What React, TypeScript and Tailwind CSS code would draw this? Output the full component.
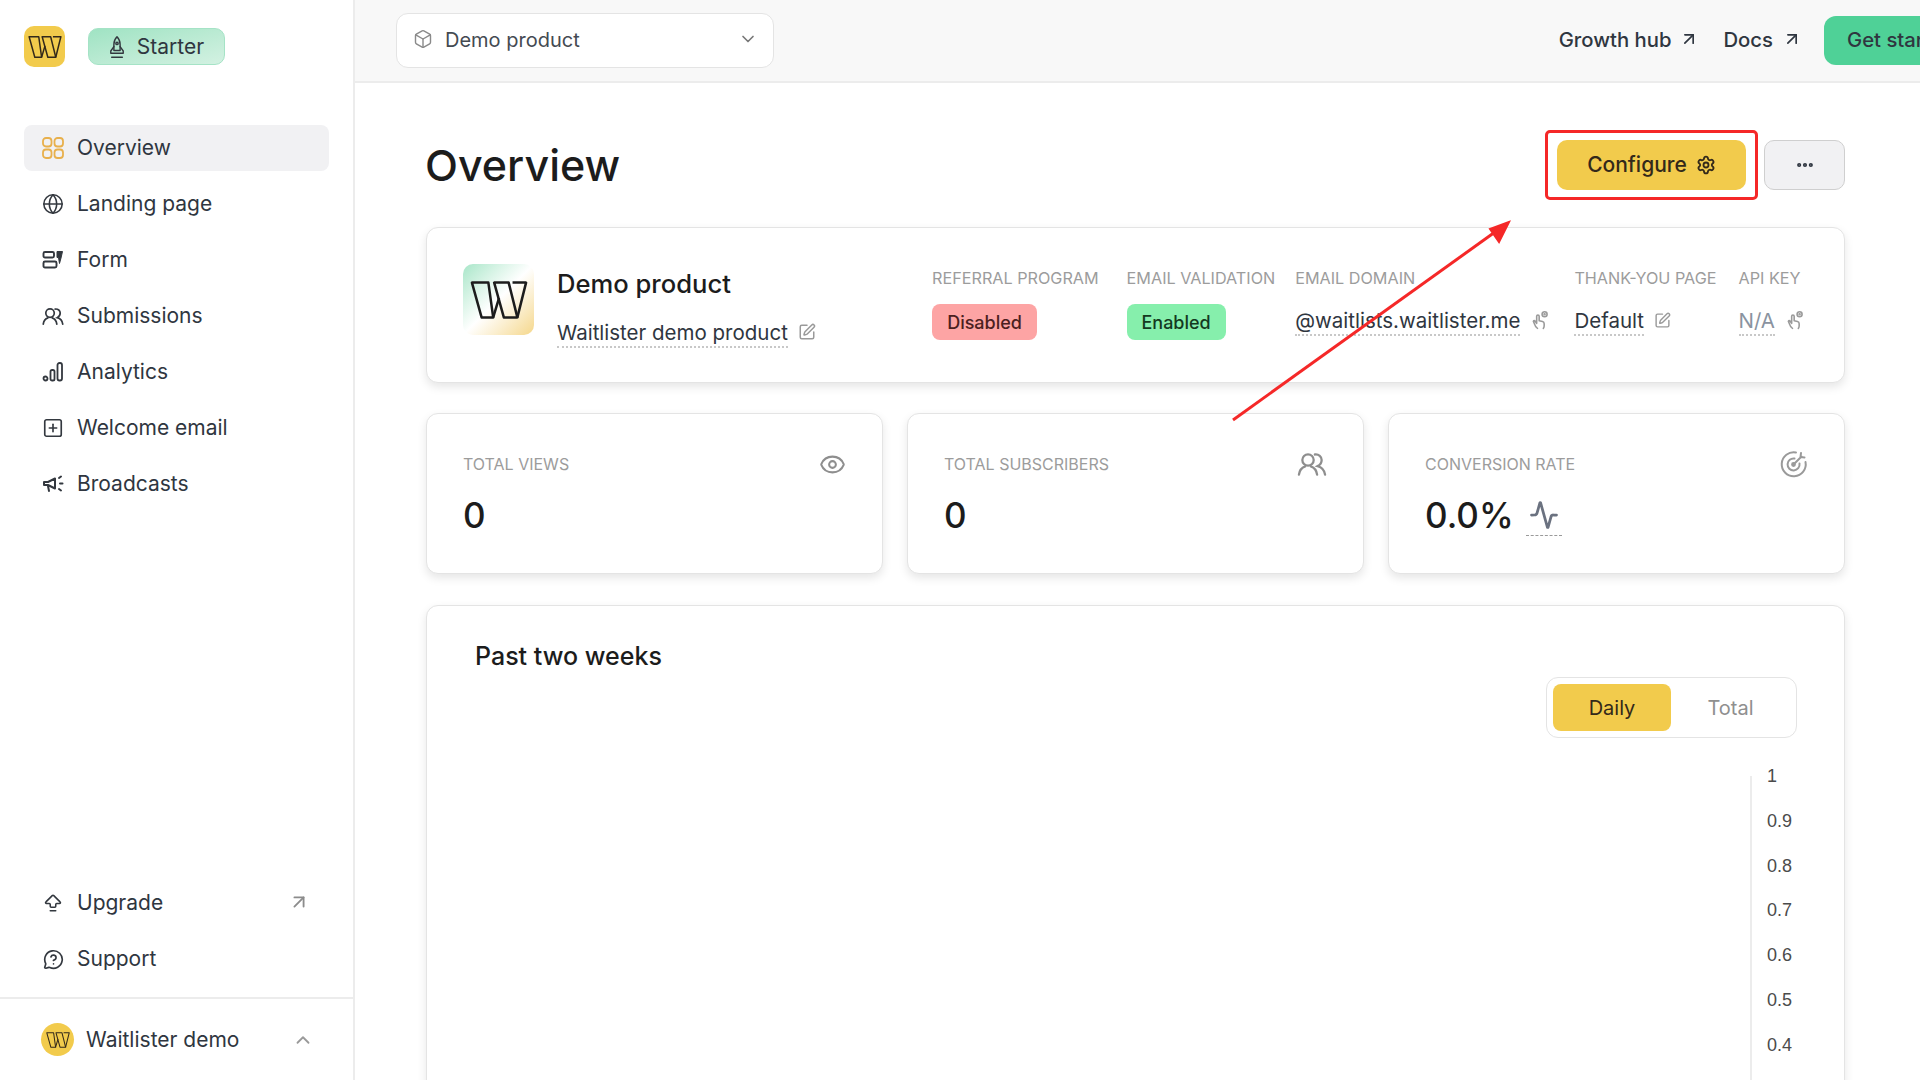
import React from 'react';
import {
  ArrowBigUpDash,
  ArrowUpRight,
  Activity,
  Box,
  ChevronDown,
  ChevronUp,
  Ellipsis,
  Eye,
  Globe,
  MessageCircleQuestion,
  Settings,
  SquarePen,
  SquarePlus,
} from 'lucide-react';

const WMark = ({ className }: { className?: string }) => (
  <svg viewBox="0 0 60 40" className={className} fill="none" stroke="currentColor" strokeWidth="2.6" strokeLinejoin="round">
    <path d="M2 2H19L24 38H12Z" />
    <path d="M25 2H40L49 38H35Z" />
    <path d="M24 38L30 18M49 38L58 2H44" />
  </svg>
);

const GridIcon = () => (
  <svg viewBox="0 0 22 22" className="w-[22px] h-[22px]" fill="none" stroke="#e8b04c" strokeWidth="1.8">
    <rect x="1" y="1" width="8.5" height="8.5" rx="3" />
    <rect x="12.5" y="1" width="8.5" height="8.5" rx="3" />
    <rect x="1" y="12.5" width="8.5" height="8.5" rx="3" />
    <rect x="12.5" y="12.5" width="8.5" height="8.5" rx="3" />
  </svg>
);

const FormIcon = () => (
  <svg viewBox="0 0 22 22" className="w-[22px] h-[22px]" fill="none" stroke="#33383f" strokeWidth="1.9">
    <rect x="1.5" y="3" width="10.5" height="5.5" rx="1.5" />
    <rect x="1.5" y="12.5" width="13" height="6" rx="1.5" />
    <path d="M15 2.5H20.5L19 9L17.5 14.5L16.5 8.5H15Z" fill="#33383f" strokeWidth="1" />
  </svg>
);

const UsersIcon = ({ className, color }: { className?: string; color: string }) => (
  <svg viewBox="0 0 26 22" className={className} fill="none" stroke={color} strokeWidth="2" strokeLinecap="round">
    <circle cx="9.5" cy="7" r="5" />
    <path d="M1.5 20C2 16 4.5 13.5 7 12.6M12 12.6C14.5 13.5 17 16 17.5 20" />
    <path d="M15.5 2.2C19 1.8 21.5 4 21.5 7C21.5 9.6 20 11.4 18 12.4C21.5 13.4 24 16 24.5 20" />
  </svg>
);

const BarsIcon = () => (
  <svg viewBox="0 0 22 22" className="w-[22px] h-[22px]" fill="none" stroke="#33383f" strokeWidth="1.8">
    <circle cx="3.5" cy="17.5" r="2" />
    <rect x="8.5" y="9" width="4" height="10.5" rx="1.6" />
    <rect x="15.5" y="2" width="4.5" height="17.5" rx="2" />
  </svg>
);

const MegaphoneIcon = () => (
  <svg viewBox="0 0 22 22" className="w-[22px] h-[22px]" fill="none" stroke="#33383f" strokeWidth="2" strokeLinecap="round" strokeLinejoin="round">
    <path d="M2 9H6L13 5.5V15.5L6 12H2Z" />
    <path d="M6 13L7 18" />
    <path d="M17 5L19 3.5M18 10.5H20.5M17 16L19 17.5" />
  </svg>
);

const TargetIcon = () => (
  <svg viewBox="0 0 28 28" className="w-[28px] h-[28px]" fill="none" stroke="#9a9a9a" strokeWidth="2" strokeLinecap="round">
    <path d="M25.5 12A12 12 0 1 1 16 2.5" />
    <path d="M19.5 13.5A6 6 0 1 1 14.5 8.5" />
    <circle cx="13.5" cy="14.5" r="1.4" fill="#9a9a9a" />
    <path d="M14 14L21.5 6.5M21 3L20.5 7L24.5 7.5" />
  </svg>
);

const RocketIcon = () => (
  <svg viewBox="0 0 18 26" className="w-[16px] h-[24px]" fill="none" stroke="#33383f" strokeWidth="1.6" strokeLinejoin="round" strokeLinecap="round">
    <path d="M9 1.5C11.5 4 12.5 7 12.5 10V17H5.5V10C5.5 7 6.5 4 9 1.5Z" />
    <path d="M5.5 12.5L2 17.5V20H16V17.5L12.5 12.5" />
    <circle cx="9" cy="9" r="1.3" />
    <path d="M3 24.5H15" />
  </svg>
);

const TapIcon = ({ size = 20 }: { size?: number }) => (
  <svg viewBox="0 0 24 24" width={size} height={size} fill="none" stroke="currentColor" strokeWidth="1.9" strokeLinecap="round" strokeLinejoin="round">
    <path d="M9 22C7 21 6 19 5.5 17L4 13.5C4.5 12.5 5.5 12.5 6.2 13.5L8 16V7.5A1.5 1.5 0 0 1 11 7.5V13L15 13.8C16.5 14.1 17 15 17 16.5V19C17 20.5 16.5 21.5 16 22" />
    <circle cx="17.5" cy="5" r="3" />
    <circle cx="17.5" cy="5" r="0.6" fill="currentColor" />
  </svg>
);

const navItems: { label: string; icon: React.ReactNode; active?: boolean }[] = [
  { label: 'Overview', icon: <GridIcon />, active: true },
  { label: 'Landing page', icon: <Globe size={22} strokeWidth={1.7} /> },
  { label: 'Form', icon: <FormIcon /> },
  { label: 'Submissions', icon: <UsersIcon className="w-[24px] h-[21px]" color="#33383f" /> },
  { label: 'Analytics', icon: <BarsIcon /> },
  { label: 'Welcome email', icon: <SquarePlus size={22} strokeWidth={1.8} /> },
  { label: 'Broadcasts', icon: <MegaphoneIcon /> },
];

const NavRow = ({ label, icon, active, trailing }: { label: string; icon: React.ReactNode; active?: boolean; trailing?: React.ReactNode }) => (
  <div className={`flex items-center h-[46px] pl-[18px] pr-[22px] rounded-lg text-[21px] text-[#2f3640] ${active ? 'bg-[#f1f1f3]' : ''}`}>
    <span className="w-[22px] flex justify-center text-[#33383f]">{icon}</span>
    <span className="ml-[13px]">{label}</span>
    {trailing}
  </div>
);

const Meta = ({ label, className, children }: { label: string; className?: string; children: React.ReactNode }) => (
  <div className={`flex flex-col ${className ?? ''}`}>
    <span className="text-[16.2px] leading-[20px] text-[#9c9c9c] whitespace-nowrap">{label}</span>
    <div className="mt-[16px] h-[36px] flex items-center">{children}</div>
  </div>
);

const Linked = ({ text, muted, icon }: { text: string; muted?: boolean; icon: React.ReactNode }) => (
  <div className="flex items-center gap-[10px] whitespace-nowrap">
    <span className={`text-[20.5px] leading-[26px] border-b-2 border-dotted border-[#c8c8c8] ${muted ? 'text-[#8a93a0]' : 'text-[#2f3640]'}`}>{text}</span>
    <span className="text-[#9a9a9a] -mt-[4px]">{icon}</span>
  </div>
);

const StatCard = ({ label, icon, children }: { label: string; icon: React.ReactNode; children: React.ReactNode }) => (
  <div className="h-[161px] px-[36px] pt-[36px] bg-white rounded-xl border border-[#e4e4e4] shadow-[0_4px_10px_rgba(0,0,0,0.1)]">
    <div className="flex items-center justify-between h-[28px]">
      <span className="text-[16px] text-[#9c9c9c]">{label}</span>
      {icon}
    </div>
    <div className="mt-[15px] flex items-center text-[#1c1c1c]">{children}</div>
  </div>
);

export default function App() {
  return (
    <div className="relative flex w-[1920px] h-[1080px] overflow-hidden bg-white font-['Inter',sans-serif]">
      {/* Sidebar */}
      <aside className="flex flex-col w-[355px] flex-none border-r-2 border-[#ececec] bg-white">
        <div className="flex items-center pl-[24px] pt-[26px]">
          <div className="w-[41px] h-[41px] rounded-[10px] bg-[#f2cb4c] flex items-center justify-center text-[#33291a]">
            <WMark className="w-[34px] h-[26px]" />
          </div>
          <div className="ml-[23px] w-[137px] h-[37px] rounded-[10px] border border-[#a5e3c6] bg-gradient-to-br from-[#9fe3c3] to-[#d3f1e2] flex items-center justify-center gap-[12px] text-[21px] text-[#2f3640]">
            <RocketIcon />
            Starter
          </div>
        </div>

        <nav className="mt-[58px] mx-[24px] flex flex-col gap-[10px]">
          {navItems.map((item) => (
            <NavRow key={item.label} {...item} />
          ))}
        </nav>

        <div className="mt-auto mx-[24px] flex flex-col gap-[10px]">
          <NavRow
            label="Upgrade"
            icon={<ArrowBigUpDash size={25} strokeWidth={1.7} />}
            trailing={<ArrowUpRight size={22} className="ml-auto -mr-[3px] -mt-[2px] text-[#8c8c8c]" />}
          />
          <NavRow label="Support" icon={<MessageCircleQuestion size={21} strokeWidth={1.9} />} />
        </div>

        <div className="mt-[15px] h-[83px] border-t-2 border-[#ececec] flex items-center pl-[41px] pr-[39px]">
          <div className="w-[33px] h-[33px] rounded-full bg-[#f2cb4c] flex items-center justify-center text-[#33291a]">
            <WMark className="w-[24px] h-[18px]" />
          </div>
          <span className="ml-[12px] text-[21px] text-[#2f3640]">Waitlister demo</span>
          <ChevronUp size={22} className="ml-auto text-[#9a9a9a]" />
        </div>
      </aside>

      <div className="flex-1 min-w-0 flex flex-col">
        {/* Top bar */}
        <header className="h-[83px] flex-none flex items-center bg-[#f8f8f8] border-b-2 border-[#ececec] pl-[41px]">
          <div className="w-[378px] h-[55px] -mt-[1px] flex items-center bg-white border border-[#e4e4e4] rounded-xl pl-[16px] pr-[15px] text-[20px] text-[#444a52]">
            <Box size={20} strokeWidth={1.7} className="text-[#8a8a8a] -mt-[3px]" />
            <span className="ml-[12px]">Demo product</span>
            <ChevronDown size={20} className="ml-auto text-[#777777] -mt-[3px]" />
          </div>
          <div className="ml-auto -mr-[96px] flex items-center flex-none text-[20.3px] font-medium text-[#2f3640]">
            <span>Growth hub</span>
            <ArrowUpRight size={20} className="ml-[8px] -mt-[4px]" />
            <span className="ml-[24px]">Docs</span>
            <ArrowUpRight size={20} className="ml-[9px] -mt-[4px]" />
            <div className="ml-[22px] h-[49px] w-[192px] pl-[23px] rounded-[12px] bg-[#4fd197] flex items-center whitespace-nowrap">Get started</div>
          </div>
        </header>

        {/* Main */}
        <main className="flex-1 min-h-0 pl-[71px] pr-[75px]">
          <div className="flex items-center justify-between h-[50px] mt-[57px]">
            <h1 className="text-[43px] font-medium text-[#1c1c1c] -ml-[1px]">Overview</h1>
            <div className="flex items-center gap-[18px]">
              <div className="relative">
                <div className="w-[189px] h-[50px] rounded-[10px] bg-[#f2cb4c] flex items-center justify-center gap-[9px] text-[21px] font-medium text-[#33291a]">
                  Configure
                  <Settings size={20} strokeWidth={2.2} />
                </div>
                <div className="absolute -inset-x-[12px] -inset-y-[10px] border-[3px] border-[#f52828] rounded-[5px]" />
              </div>
              <div className="w-[81px] h-[50px] rounded-[10px] bg-[#f1f1f3] border border-[#cfcfcf] flex items-center justify-center text-[#2f3640]">
                <Ellipsis size={20} strokeWidth={3} />
              </div>
            </div>
          </div>

          {/* Product card */}
          <section className="mt-[37px] h-[156px] bg-white rounded-xl border border-[#e4e4e4] shadow-[0_4px_10px_rgba(0,0,0,0.1)] flex pl-[36px] pr-[39px] pt-[36px]">
            <div className="w-[71px] h-[71px] rounded-[10px] bg-gradient-to-br from-[#a8e6c9] via-[#ffffff] to-[#f5d78a] flex items-center justify-center text-[#1c1c1c]">
              <WMark className="w-[58px] h-[40px]" />
            </div>
            <div className="ml-[23px]">
              <div className="text-[25.6px] leading-[34px] font-medium text-[#1c1c1c] mt-[3px]">Demo product</div>
              <div className="mt-[19px] flex items-center gap-[10px]">
                <span className="text-[20.5px] leading-[26px] text-[#2f3640] border-b-2 border-dotted border-[#c8c8c8]">Waitlister demo product</span>
                <SquarePen size={18} className="text-[#9a9a9a] -mt-[4px]" />
              </div>
            </div>
            <div className="ml-auto flex pt-[4px]">
              <Meta label="REFERRAL PROGRAM">
                <span className="w-[105px] h-[36px] rounded-[8px] bg-[#fda4a4] flex items-center justify-center text-[18px] font-medium text-[#4b2020]">Disabled</span>
              </Meta>
              <Meta label="EMAIL VALIDATION" className="ml-[28px]">
                <span className="w-[99px] h-[36px] rounded-[8px] bg-[#86efac] flex items-center justify-center text-[18px] font-medium text-[#14391f]">Enabled</span>
              </Meta>
              <Meta label="EMAIL DOMAIN" className="ml-[20px]">
                <Linked text="@waitlists.waitlister.me" icon={<TapIcon />} />
              </Meta>
              <Meta label="THANK-YOU PAGE" className="ml-[24px]">
                <Linked text="Default" icon={<SquarePen size={17} />} />
              </Meta>
              <Meta label="API KEY" className="ml-[22px]">
                <Linked text="N/A" muted icon={<TapIcon />} />
              </Meta>
            </div>
          </section>

          {/* Stats */}
          <div className="mt-[30px] grid grid-cols-3 gap-[24px]">
            <StatCard label="TOTAL VIEWS" icon={<Eye size={27} strokeWidth={1.8} className="text-[#8e8e8e]" />}>
              <span className="text-[35px] leading-[44px] font-medium">0</span>
            </StatCard>
            <StatCard label="TOTAL SUBSCRIBERS" icon={<UsersIcon className="w-[30px] h-[25px]" color="#8e8e8e" />}>
              <span className="text-[35px] leading-[44px] font-medium">0</span>
            </StatCard>
            <StatCard label="CONVERSION RATE" icon={<TargetIcon />}>
              <span className="text-[35px] leading-[44px] font-medium">0.0%</span>
              <span className="ml-[12px] mt-[6px] w-[36px] h-[36px] border-b border-dashed border-[#9a9a9a] flex justify-center">
                <Activity size={30} strokeWidth={2.2} className="text-[#6b7280]" />
              </span>
            </StatCard>
          </div>

          {/* Chart */}
          <section className="mt-[31px] h-[600px] bg-white rounded-xl border border-[#e4e4e4] shadow-[0_4px_10px_rgba(0,0,0,0.1)] pt-[33px] pl-[48px] pr-[47px]">
            <h2 className="text-[25px] leading-[34px] font-medium text-[#1c1c1c]">Past two weeks</h2>
            <div className="flex justify-end mt-[4px]">
              <div className="w-[251px] h-[61px] rounded-xl border border-[#e4e4e4] p-[6px] flex items-center text-[20px]">
                <span className="w-[118px] h-[47px] rounded-[8px] bg-[#f2cb4c] flex items-center justify-center text-[#33291a]">Daily</span>
                <span className="flex-1 text-center text-[#8f8f8f]">Total</span>
              </div>
            </div>
            <div className="mt-[38px] ml-auto w-[47px] h-[320px] border-l-2 border-[#ececec] pl-[15px] flex flex-col font-['Liberation_Sans',sans-serif] text-[18px] leading-[22px] text-[#4b4b4b]">
              <div className="-mt-[11px] flex flex-col gap-[22.8px]">
                {['1', '0.9', '0.8', '0.7', '0.6', '0.5', '0.4'].map((tick) => (
                  <span key={tick}>{tick}</span>
                ))}
              </div>
            </div>
          </section>
        </main>
      </div>

      {/* Annotation arrow */}
      <svg className="absolute inset-0 w-[1920px] h-[1080px] pointer-events-none" viewBox="0 0 1920 1080">
        <path d="M1233 420L1502 227" stroke="#f52828" strokeWidth="3" />
        <path d="M1509 222L1490 229L1499 242Z" fill="#f52828" stroke="#f52828" strokeWidth="2" />
      </svg>
    </div>
  );
}
